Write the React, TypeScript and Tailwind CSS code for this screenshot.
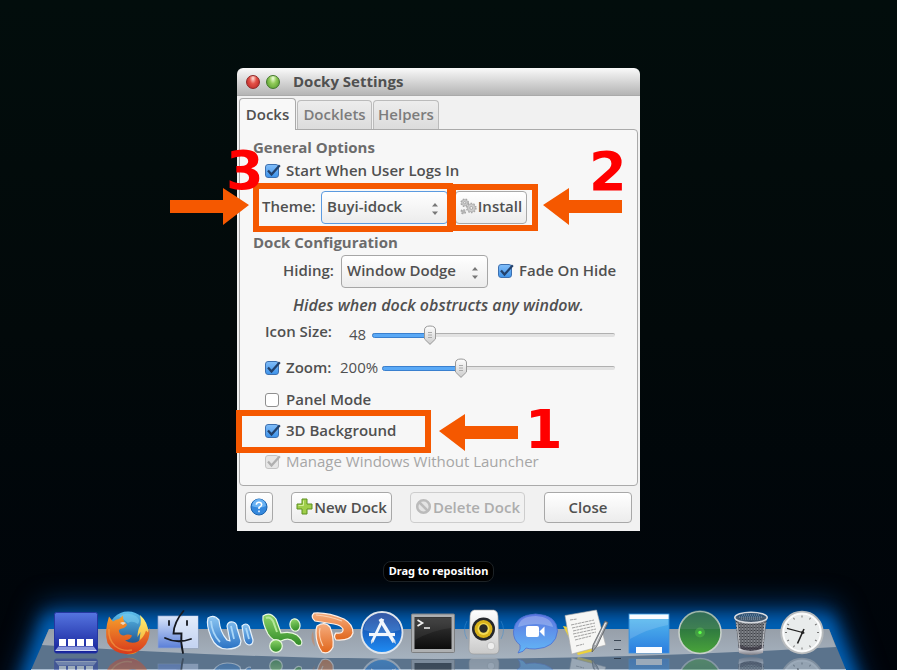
import { useState, type ReactNode } from "react";

const sans = "font-['Open_Sans','Noto_Sans',sans-serif]";

/* ---------- Form controls ---------- */

function Check({ label, checked = false, disabled = false }: { label: string; checked?: boolean; disabled?: boolean }) {
  const [on, setOn] = useState(checked);
  const tone = disabled
    ? "border-[#c4c4c4] bg-[#e6e6e6]"
    : on
      ? "border-[#3d70b0] bg-linear-to-b from-[#7fbcf8] to-[#3f94ea]"
      : "border-[#8f8f8f] bg-white";
  return (
    <label className={`flex h-6 items-center gap-[6px] pb-[2px] whitespace-nowrap ${disabled ? "font-normal text-[#a6a6a6]" : ""}`}>
      <span className="relative mt-[2px] block size-[15px]">
        <input
          type="checkbox"
          checked={on}
          disabled={disabled}
          onChange={(e) => setOn(e.target.checked)}
          className={`block size-[14px] appearance-none rounded-[3px] border ${tone}`}
        />
        {on && (
          <svg viewBox="0 0 15 15" className="pointer-events-none absolute inset-0 size-[15px] overflow-visible">
            <path d="M3 6.6 L6.5 10.6 L14.8 1.2" fill="none" stroke={disabled ? "#b0b0b0" : "#22416c"} strokeWidth="2.3" />
          </svg>
        )}
      </span>
      {label}
    </label>
  );
}

function Picker({ id, value, width, focused = false }: { id: string; value: string; width: string; focused?: boolean }) {
  return (
    <div className={`relative h-[33px] shrink-0 ${width}`}>
      <select
        id={id}
        defaultValue={value}
        className={`h-full w-full appearance-none rounded-[4px] border bg-linear-to-b from-white to-[#ececec] pb-[2px] pl-[5px] outline-none ${focused ? "border-[#5c9be0]" : "border-[#a6a6a6]"}`}
      >
        <option>{value}</option>
      </select>
      <svg viewBox="0 0 8 14" className="pointer-events-none absolute top-[11px] right-[9px] h-[14px] w-2">
        <path d="M1 4.500 L4 1 L7 4.500Z M1 9.500 L4 13 L7 9.500Z" fill="#777" />
      </svg>
    </div>
  );
}

function Slider({ label, start }: { label: string; start: number }) {
  const [value, setValue] = useState(start);
  return (
    <div className="relative h-5 flex-1">
      <div className="absolute inset-x-0 top-2 h-1 rounded-full border-t border-[#b0b0b0] bg-[#e2e2e2]" />
      <div className="absolute top-2 left-0 h-[5px] rounded-full border border-[#3a80cf] bg-[#5aa9f6]" style={{ width: `${value}%` }} />
      <svg viewBox="0 0 12 20" className="absolute top-0 h-5 w-3 -translate-x-1/2" style={{ left: `${value}%` }}>
        <defs>
          <linearGradient id="thumb" x2="0" y2="1">
            <stop stopColor="#fff" />
            <stop offset="1" stopColor="#ccc" />
          </linearGradient>
        </defs>
        <path d="M.5 5 Q.5 1 6 1 Q11.500 1 11.500 5 V14 L6 19.400 L.5 14Z" fill="url(#thumb)" stroke="#999" />
        <path d="M4 7.500h4M4 10h4M4 12.500h4" stroke="#aaa" />
      </svg>
      <input
        type="range"
        aria-label={label}
        value={value}
        onChange={(e) => setValue(Number(e.target.value))}
        className="absolute inset-0 w-full opacity-0"
      />
    </div>
  );
}

function PushButton({ children, className, disabled = false, label }: { children: ReactNode; className: string; disabled?: boolean; label?: string }) {
  return (
    <button
      type="button"
      disabled={disabled}
      aria-label={label}
      className={`flex shrink-0 items-center justify-center gap-px rounded-[4px] border pb-[2px] whitespace-nowrap ${disabled ? "border-[#cdcdcd] bg-[#f1f1f1] text-[#adadad]" : "border-[#a8a8a8] bg-linear-to-b from-white to-[#ececec]"} ${className}`}
    >
      {children}
    </button>
  );
}

function Gear({ x, y, r }: { x: number; y: number; r: number }) {
  return (
    <g transform={`translate(${x} ${y})`}>
      <circle r={r} fill="#c4c4c4" stroke="#a5a5a5" strokeWidth="2" strokeDasharray="1.6 1.3" />
      <circle r={r - 0.5} fill="#cdcdcd" stroke="#b2b2b2" strokeWidth=".7" />
      <circle r={r / 3} fill="#f3f3f3" stroke="#999" strokeWidth=".8" />
    </g>
  );
}

/* ---------- Settings window ---------- */

function SettingsWindow() {
  return (
    <section className="relative w-[403px] text-[15px] leading-5 font-semibold text-[#505050]">
      <header className="flex h-7 items-center gap-[6px] rounded-t-[6px] border-b border-[#aaa] bg-linear-to-b from-[#fafafa] to-[#b4b4b4] pl-[9px]">
        <button type="button" aria-label="Close window" className="size-[14px] rounded-full border border-[#8d2626] bg-radial-[at_50%_20%] from-[#ffe1da] via-[#e35248] via-40% to-[#b51f20]" />
        <button type="button" aria-label="Zoom window" className="size-[14px] rounded-full border border-[#41762a] bg-radial-[at_50%_20%] from-[#f0ffdc] via-[#91ca58] via-40% to-[#4b9427]" />
        <h1 className="ml-[7px] pb-[2px] font-bold">Docky Settings</h1>
      </header>

      <div className="bg-[#f1f1f1] px-[2px] pt-[2px] pb-2">
        <nav role="tablist" className="flex h-[31px] items-end gap-px text-[#7c7c7c]">
          <button role="tab" aria-selected="true" className="z-1 h-8 w-[57px] translate-y-px rounded-t-[4px] border border-b-0 border-[#aaa] bg-[#f8f8f8] pb-[2px] text-[#505050]">Docks</button>
          <button role="tab" aria-selected="false" className="h-[29px] w-[75px] rounded-t-[4px] border border-b-0 border-[#bbb] bg-linear-to-b from-[#ededed] to-[#dcdcdc] pb-[2px]">Docklets</button>
          <button role="tab" aria-selected="false" className="h-[29px] w-[66px] rounded-t-[4px] border border-b-0 border-[#bbb] bg-linear-to-b from-[#ededed] to-[#dcdcdc] pb-[2px]">Helpers</button>
        </nav>

        <div role="tabpanel" className="rounded-b-[4px] rounded-tr-[4px] border border-[#aaa] bg-[#f7f7f7] pt-[7px] pr-[22px] pb-[11px] pl-[13px]">
          <h2 className="font-bold text-[#6c6c6c]">General Options</h2>
          <div className="mt-[2px] pl-3">
            <Check label="Start When User Logs In" checked />
          </div>
          <div className="mt-[7px] flex h-[34px] items-center pl-[9px]">
            <label htmlFor="theme" className="w-[59px] shrink-0 pb-[2px]">Theme:</label>
            <Picker id="theme" value="Buyi-idock" width="w-[127px]" focused />
            <PushButton className="ml-[7px] h-[33px] w-[72px]">
              <svg viewBox="0 0 18 18" className="size-[17px]">
                <Gear x={5} y={5} r={3.6} />
                <Gear x={12} y={10.5} r={4.6} />
                <Gear x={3.5} y={14.5} r={2} />
              </svg>
              Install
            </PushButton>
          </div>

          <h2 className="mt-2 font-bold text-[#6c6c6c]">Dock Configuration</h2>
          <div className="mt-[2px] flex h-[34px] items-center pl-[30px]">
            <label htmlFor="hiding" className="w-[58px] shrink-0 pb-[2px]">Hiding:</label>
            <Picker id="hiding" value="Window Dodge" width="w-[147px]" />
            <div className="ml-[10px]">
              <Check label="Fade On Hide" checked />
            </div>
          </div>
          <p className="mt-[7px] pl-10 text-base leading-5 whitespace-nowrap italic">Hides when dock obstructs any window.</p>
          <div className="mt-[5px] flex h-[30px] items-center pl-3">
            <span className="w-[84px] pb-2">Icon Size:</span>
            <span className="w-[23px] pb-[2px] font-normal">48</span>
            <Slider label="Icon size" start={24} />
          </div>
          <div className="mt-[3px] flex h-[30px] items-center pl-3">
            <div className="w-[75px]">
              <Check label="Zoom:" checked />
            </div>
            <span className="w-[42px] pb-[2px] font-normal">200%</span>
            <Slider label="Zoom" start={34} />
          </div>
          <div className="mt-[5px] flex flex-col gap-[7px] pl-3">
            <Check label="Panel Mode" />
            <Check label="3D Background" checked />
            <Check label="Manage Windows Without Launcher" checked disabled />
          </div>
        </div>

        <footer className="mt-[6px] flex h-[31px] pl-[6px]">
          <PushButton className="w-7" label="Help">
            <svg viewBox="0 0 18 18" className="size-[18px]">
              <circle cx="9" cy="9" r="8" fill="#3488dd" stroke="#1c62ab" />
              <path d="M2 8a7 7 0 0 1 14 0Q9 11 2 8" fill="#69b2f3" />
              <path d="M6.300 6.800Q6.500 4.300 9 4.300T11.700 6.700Q11.700 8.200 9 9.500V11M9 12.500v1.700" fill="none" stroke="#fff" strokeWidth="1.5" />
            </svg>
          </PushButton>
          <PushButton className="ml-[18px] w-[101px]">
            <svg viewBox="0 0 17 17" className="size-[17px]">
              <path d="M6 1h5v5h5v5h-5v5H6v-5H1V6h5z" fill="#9fce4a" stroke="#5c9020" />
              <path d="M7.500 2.500v5h-5" fill="none" stroke="#d3ee98" />
            </svg>
            New Dock
          </PushButton>
          <PushButton className="ml-[18px] w-[115px]" disabled>
            <svg viewBox="0 0 17 17" className="size-[17px]">
              <circle cx="8.500" cy="8.500" r="6.300" fill="#e4e4e4" stroke="#bbb" strokeWidth="2.500" />
              <path d="M4 4l9 9" stroke="#bbb" strokeWidth="2.500" />
            </svg>
            Delete Dock
          </PushButton>
          <PushButton className="ml-[19px] w-[88px]">Close</PushButton>
        </footer>
      </div>

      <Callouts />
    </section>
  );
}

/* Numbered steps drawn over the window. */
function Callouts() {
  return (
    <div className="pointer-events-none absolute inset-0 font-['DejaVu_Sans',sans-serif] text-[54px] leading-none font-bold text-[#f00]">
      <svg viewBox="0 0 403 463" className="absolute inset-0 h-[463px] w-[403px] overflow-visible">
        <g fill="none" stroke="#f55800" strokeWidth="6">
          <rect x="19" y="118" width="194" height="43" />
          <rect x="216" y="119" width="82" height="41" />
          <rect x="2" y="345" width="189" height="37" />
        </g>
        <g fill="#f55800">
          <path d="M-67 132h53v-12l26 17-26 20v-12h-53z" />
          <path d="M385 132h-53v-12l-26 17 26 20v-12h53z" />
          <path d="M281 358h-53v-12l-26 17 26 20v-12h53z" />
        </g>
      </svg>
      <span className="absolute top-[76px] left-[-11px]">3</span>
      <span className="absolute top-[77px] left-[352px]">2</span>
      <span className="absolute top-[335px] left-[288px]">1</span>
    </div>
  );
}

/* ---------- Dock icons, each on a 44 × 44 grid ---------- */

function Gradients() {
  const list: [string, string, string][] = [
    ["docky", "#5575e0", "#15219a"],
    ["sky", "#5dc0ee", "#12407f"],
    ["fox", "#f6a02c", "#d8391c"],
    ["flame", "#fff27a", "#f09a1a"],
    ["finder", "#dbe7fb", "#5a7fd8"],
    ["word", "#8cc6f2", "#2a72c4"],
    ["excel", "#8fd66a", "#2f8a26"],
    ["power", "#f6ad7e", "#e0661c"],
    ["store", "#123a94", "#1f8df5"],
    ["term", "#3a3a3a", "#0c0c0c"],
    ["shell", "#ffffff", "#c9c9c9"],
    ["chat", "#5b74e0", "#63b8f6"],
    ["desk", "#55bdf0", "#2b7ddf"],
    ["radar", "#1b5a44", "#4aa53a"],
    ["steel", "#e4e4ea", "#7d7d85"],
  ];
  return (
    <svg className="absolute size-0">
      <defs>
        {list.map(([id, from, to]) => (
          <linearGradient key={id} id={id} x2="0" y2="1">
            <stop stopColor={from} />
            <stop offset="1" stopColor={to} />
          </linearGradient>
        ))}
        <pattern id="mesh" width="3" height="3" patternUnits="userSpaceOnUse">
          <rect width="3" height="3" fill="#3c3f45" />
          <path d="M0 1.500L1.500 0L3 1.500L1.500 3Z" fill="none" stroke="#b9bcc2" strokeWidth=".7" />
        </pattern>
      </defs>
    </svg>
  );
}

const ticks = Array.from({ length: 12 }, (_, i) => i * 30);

const apps: { name: string; art: ReactNode }[] = [
  {
    name: "Docky",
    art: (
      <>
        <rect x=".5" y="1.500" width="43" height="40.500" rx="2" fill="url(#docky)" stroke="#2536a0" />
        <path d="M5 28h7v7H5zM14 28h7v7h-7zM23 28h7v7h-7zM32 28h7v7h-7z" fill="#fff" />
        <path d="M4.500 35.500h35l3 3.500h-41z" fill="#8f9cdc" />
        <path d="M1.500 39h41v1h-41z" fill="#d5daf5" />
      </>
    ),
  },
  {
    name: "Firefox",
    art: (
      <>
        <circle cx="23" cy="20" r="19.500" fill="url(#sky)" />
        <path d="M14 5q8-5 17 0 5 4 2 8-6-4-10-1z" fill="#7fd2f2" opacity=".5" />
        <path d="M35 4q8 7 8.500 18-2 13-13 20-5 2-9 1 10-4 13-14l1-8-3 5q0-7 3-12 1-5-.5-10z" fill="url(#flame)" />
        <path d="M4 5.500l4 5q3-2.500 6-2.500l4-3.500q0 4 1 6l3 3q-1 3-5 4-4 1-3 3 1 4 5 4 4-2 8 0-1 4-7 5 7 4 13 1 6-4 8-11l2 2 1.500-5q1 13-6.500 20Q31 43.500 21 43 8 42 2.500 32-1 21 4 5.500z" fill="url(#fox)" />
        <path d="M4 18q-1 10 6 17 8 6 17 4" fill="none" stroke="#f7a34a" strokeWidth="1.500" opacity=".6" />
        <path d="M15 12q3-2 6 0l-3 2z" fill="#ead8c3" />
      </>
    ),
  },
  {
    name: "Finder",
    art: (
      <>
        <rect x="2" y="5" width="40" height="32" fill="url(#finder)" stroke="#8fa4cf" strokeWidth=".7" />
        <path d="M27 5Q18 14 18 23h8q-1 8 1 14h15V5z" fill="#e6edf9" opacity=".75" />
        <path d="M27.500 0Q18 11 17.500 22.500h8Q24.500 32 27 42M9 27q12 6 26 1M13 10v4M31 10v4" fill="none" stroke="#15181f" strokeWidth="1.800" strokeLinecap="round" />
      </>
    ),
  },
  {
    name: "Word",
    art: (
      <g stroke="#e6f2fc" strokeWidth="1.200" strokeLinejoin="round">
        <path d="M1 7q6-4 11 2 1 12 8 20l3 1-3-15q1-5 6-4 4 1 4 6l4 13-1 4q-4 4-13 4Q9 38 4 26-1 14 1 7z" fill="url(#word)" />
        <path d="M35 15q4-4 7 0l4 14q0 5-4 5-4-1-5-6z" fill="url(#word)" />
        <path d="M4 10q1 13 9 21M24 15l3 13M39 17l3 11" fill="none" stroke="#a9d6f8" strokeWidth="1.800" />
      </g>
    ),
  },
  {
    name: "Excel",
    art: (
      <g fill="url(#excel)" stroke="#e9f7e0" strokeWidth="1.200">
        <path d="M5 5q7-5 13 3l5 14q10-2 16 2 7 6 4 10-4 2-7-3-5-5-13-1-8 1-13-7Q4 12 5 5z" />
        <ellipse cx="37" cy="14" rx="5" ry="6.200" transform="rotate(-15 37 14)" />
        <circle cx="18" cy="35" r="6.300" />
        <path d="M8 7q4-2 7 3l4 11" fill="none" stroke="#b5e89a" strokeWidth="2" />
      </g>
    ),
  },
  {
    name: "PowerPoint",
    art: (
      <g stroke="#fff0e6" strokeWidth="1.200">
        <path d="M4 20q-4 8 2 16" fill="#d9773d" opacity=".4" stroke="none" />
        <path d="M5 2q14-1 30 6 9 5 9 14-2 8-17 7-3-4 0-7 8 1 7-4-2-4-9-5L6 10Q1 6 5 2z" fill="url(#power)" />
        <path d="M8 15q8-5 13 1 4 10 3 20-4 8-11 5-6-8-6-19 0-5 1-7z" fill="url(#power)" />
        <path d="M11 17q-2 8 3 18M7 4q13 1 26 6" fill="none" stroke="#fbd0b0" />
      </g>
    ),
  },
  {
    name: "App Store",
    art: (
      <>
        <circle cx="22" cy="21.500" r="20.500" fill="url(#store)" stroke="#dfe5ec" strokeWidth="1.800" />
        <path d="M4 19a18 17 0 0 1 36 0Q22 25 4 19" fill="#fff" opacity=".14" />
        <g stroke="#f2f7fd" strokeWidth="2.800">
          <path d="M23 8L12 31" />
          <path d="M20 8l14 23" strokeWidth="3.400" />
          <path d="M9 23.500h26" strokeWidth="3.200" />
        </g>
        <path d="M11 29l3 1-3 3zM32 30l3-1 1 4z" fill="#c9d8ea" />
      </>
    ),
  },
  {
    name: "Terminal",
    art: (
      <>
        <rect x=".5" y="3" width="43" height="38.500" rx="1" fill="#aeb0b2" stroke="#7d7f81" />
        <rect x="3.500" y="6" width="37" height="32" fill="url(#term)" />
        <path d="M4 7h36v10Q22 19 4 29z" fill="#fff" opacity=".06" />
        <path d="M6.500 9l5 3-5 3M13 17h6" fill="none" stroke="#f3f3f3" strokeWidth="1.700" />
      </>
    ),
  },
  {
    name: "Speaker",
    art: (
      <>
        <path d="M5 10q-5 9 0 18M39 10q5 9 0 18" fill="none" stroke="#3d8bd0" opacity=".5" />
        <path d="M12-1h20q4 1 4 6l1 33q0 5-5 5H12q-5 0-5-5L8 5q0-5 4-6z" fill="url(#shell)" stroke="#999" strokeWidth=".6" />
        <circle cx="21.500" cy="18" r="11.500" fill="#25272b" />
        <circle cx="21.500" cy="18" r="9" fill="#d9b21a" />
        <circle cx="21.500" cy="18" r="6" fill="#f3db55" />
        <circle cx="21.500" cy="17.500" r="4.200" fill="#2a2a26" />
        <circle cx="29" cy="35" r="3.800" fill="#eee" stroke="#bbb" strokeWidth=".8" />
      </>
    ),
  },
  {
    name: "Chat",
    art: (
      <>
        <path d="M22.500 3Q44 4 44.500 20 43 37 22 38q-6 0-9-1-2 4-8 5 3-4 2-8Q0 29 .500 20 2 4 22.500 3z" fill="url(#chat)" stroke="#4c6fd0" strokeWidth=".8" />
        <path d="M5 16q2-11 18-11 15 1 17 11-17-6-35 0" fill="#fff" opacity=".25" />
        <rect x="13" y="15" width="13" height="11" rx="2" fill="#fff" />
        <path d="M26.500 20.500L31.500 15.500v10z" fill="#fff" />
      </>
    ),
  },
  {
    name: "Documents",
    art: (
      <>
        <path d="M-1 15l15 29 16-4-5-20z" fill="#ecd23c" />
        <path d="M1 4.500L32.500-1l9.200 35-34 9z" fill="#f6f6f4" stroke="#aaa" strokeWidth=".6" />
        <path d="M6 9l7-1M7 14l23-5M8 17l23-5M9 20l22-5M9 23l23-5M10 26l22-5M11 29l16-4M12 35l8-2" stroke="#8a8a8a" strokeWidth=".8" strokeDasharray="3 .6" />
        <path d="M41 10l3 1.500L33 35l-5 6 1-7z" fill="#a5a8ac" stroke="#55585c" strokeWidth=".8" />
        <path d="M41.500 12L31 34" stroke="#f5f5f5" />
      </>
    ),
  },
  {
    name: "Desktop",
    art: (
      <>
        <rect x="2" y="3" width="40" height="39" fill="url(#desk)" stroke="#3f93dc" strokeWidth=".8" />
        <path d="M2.500 3.500h39V8h-39zM9 36h26v6H9z" fill="#fafcff" />
        <path d="M3 8h38v6Q20 18 3 28z" fill="#fff" opacity=".14" />
      </>
    ),
  },
  {
    name: "Radar",
    art: (
      <>
        <circle cx="22" cy="21.500" r="21" fill="url(#radar)" stroke="#c7cfca" strokeWidth="1.600" />
        <path d="M2 18a20 19 0 0 1 40 0z" fill="#5e8f78" opacity=".35" />
        <circle cx="22" cy="21.500" r="5" fill="#6ae04f" opacity=".3" />
        <circle cx="22" cy="21.500" r="1.700" fill="#5eff4a" />
      </>
    ),
  },
  {
    name: "Trash",
    art: (
      <>
        <path d="M6 6l4 34q12 7 24 0l4-34z" fill="url(#mesh)" />
        <path d="M9.500 33.500q12 5 25 0L34 41q-12 5-24 0z" fill="#302b38" opacity=".6" />
        <path d="M9.500 37q12 6 25 0l-.5 5q-12 4-24 0z" fill="url(#steel)" />
        <ellipse cx="22" cy="6.500" rx="16.200" ry="5.200" fill="#3d5871" fillOpacity=".8" stroke="#d6d9de" strokeWidth="1.600" />
        <path d="M10 6h24M12 8h20M13 4h18" stroke="#a9bccd" strokeWidth=".7" strokeDasharray="1 1" />
        <path d="M8 12l3 27M36 12l-3 27" stroke="#e3e5e9" strokeWidth="1" opacity=".7" />
      </>
    ),
  },
  {
    name: "Clock",
    art: (
      <>
        <circle cx="22" cy="21.500" r="20.800" fill="#f4f5f5" stroke="#b8bbbd" strokeWidth="1.800" />
        <circle cx="22" cy="21.500" r="18.500" fill="#e9ecec" stroke="#fff" strokeWidth="1.200" />
        {ticks.map((a) => (
          <path key={a} d="M22 4.500v2" stroke="#777" transform={`rotate(${a} 22 21.500)`} />
        ))}
        <path d="M7 17.300l17.500 4.700" stroke="#222" strokeWidth="1.200" />
        <path d="M24 18l-6.500 14.500" stroke="#222" strokeWidth="1.600" />
        <circle cx="22.500" cy="21.500" r="1.500" fill="#222" />
      </>
    ),
  },
];

function DockItem({ name, art }: { name: string; art: ReactNode }) {
  return (
    <button type="button" aria-label={name} className="block w-11">
      <svg viewBox="0 0 44 44" className="block size-11 overflow-visible">{art}</svg>
      <span className="mt-[2px] block h-[13px] overflow-hidden opacity-40">
        <svg viewBox="0 0 44 44" className="block size-11 -scale-y-100">{art}</svg>
      </span>
    </button>
  );
}

function Dock() {
  return (
    <nav aria-label="Dock" className="relative flex h-[59px] w-[815px] gap-[7px] pl-[23px]">
      <Gradients />
      <svg viewBox="0 0 815 59" className="absolute inset-0 -z-1 h-[59px] w-[815px] overflow-visible">
        <defs>
          <filter id="wide" x="-20%" y="-200%" width="140%" height="500%" colorInterpolationFilters="sRGB">
            <feGaussianBlur stdDeviation="14" />
          </filter>
          <filter id="tight" x="-20%" y="-200%" width="140%" height="500%" colorInterpolationFilters="sRGB">
            <feGaussianBlur stdDeviation="8" />
          </filter>
          <linearGradient id="shelf" x2="0" y2="1">
            <stop stopColor="#979fa9" />
            <stop offset="1" stopColor="#a6b2bf" />
          </linearGradient>
        </defs>
        <path d="M14-6h788l34 98H-20z" fill="#003c7a" filter="url(#wide)" />
        <path d="M14 4h786l30 72H-12z" fill="#0060b4" filter="url(#tight)" />
        <path d="M18 18h780l17 41H0z" fill="#5b738c" />
        <path d="M18 18h780l7 18Q600 48 408 48T11 34z" fill="url(#shelf)" />
        <path d="M0 58.500h815" stroke="#a9bccf" />
      </svg>
      {apps.slice(0, 11).map((app) => (
        <DockItem key={app.name} {...app} />
      ))}
      <div className="flex w-[5px] flex-col gap-2 pt-[29px]">
        <span className="-mx-px h-px bg-[#3a4654]" />
        <span className="-mx-px h-px bg-[#3a4654]" />
        <span className="-mx-px h-px bg-[#2c3a4a]" />
      </div>
      {apps.slice(11).map((app) => (
        <DockItem key={app.name} {...app} />
      ))}
    </nav>
  );
}

export default function App() {
  return (
    <main className={`relative isolate flex h-screen min-h-[670px] flex-col items-center overflow-hidden bg-linear-to-b from-[#020d0c] via-[#02090a] to-[#00040a] pt-[68px] pr-5 ${sans}`}>
      <SettingsWindow />
      <div role="tooltip" className="mt-[30px] flex h-[21px] items-center rounded-[8px] border border-[#1c2226] bg-black px-[5px] pb-px text-[11px] font-bold text-white font-['Noto_Sans',sans-serif]">
        Drag to reposition
      </div>
      <div className="mt-auto">
        <Dock />
      </div>
    </main>
  );
}
